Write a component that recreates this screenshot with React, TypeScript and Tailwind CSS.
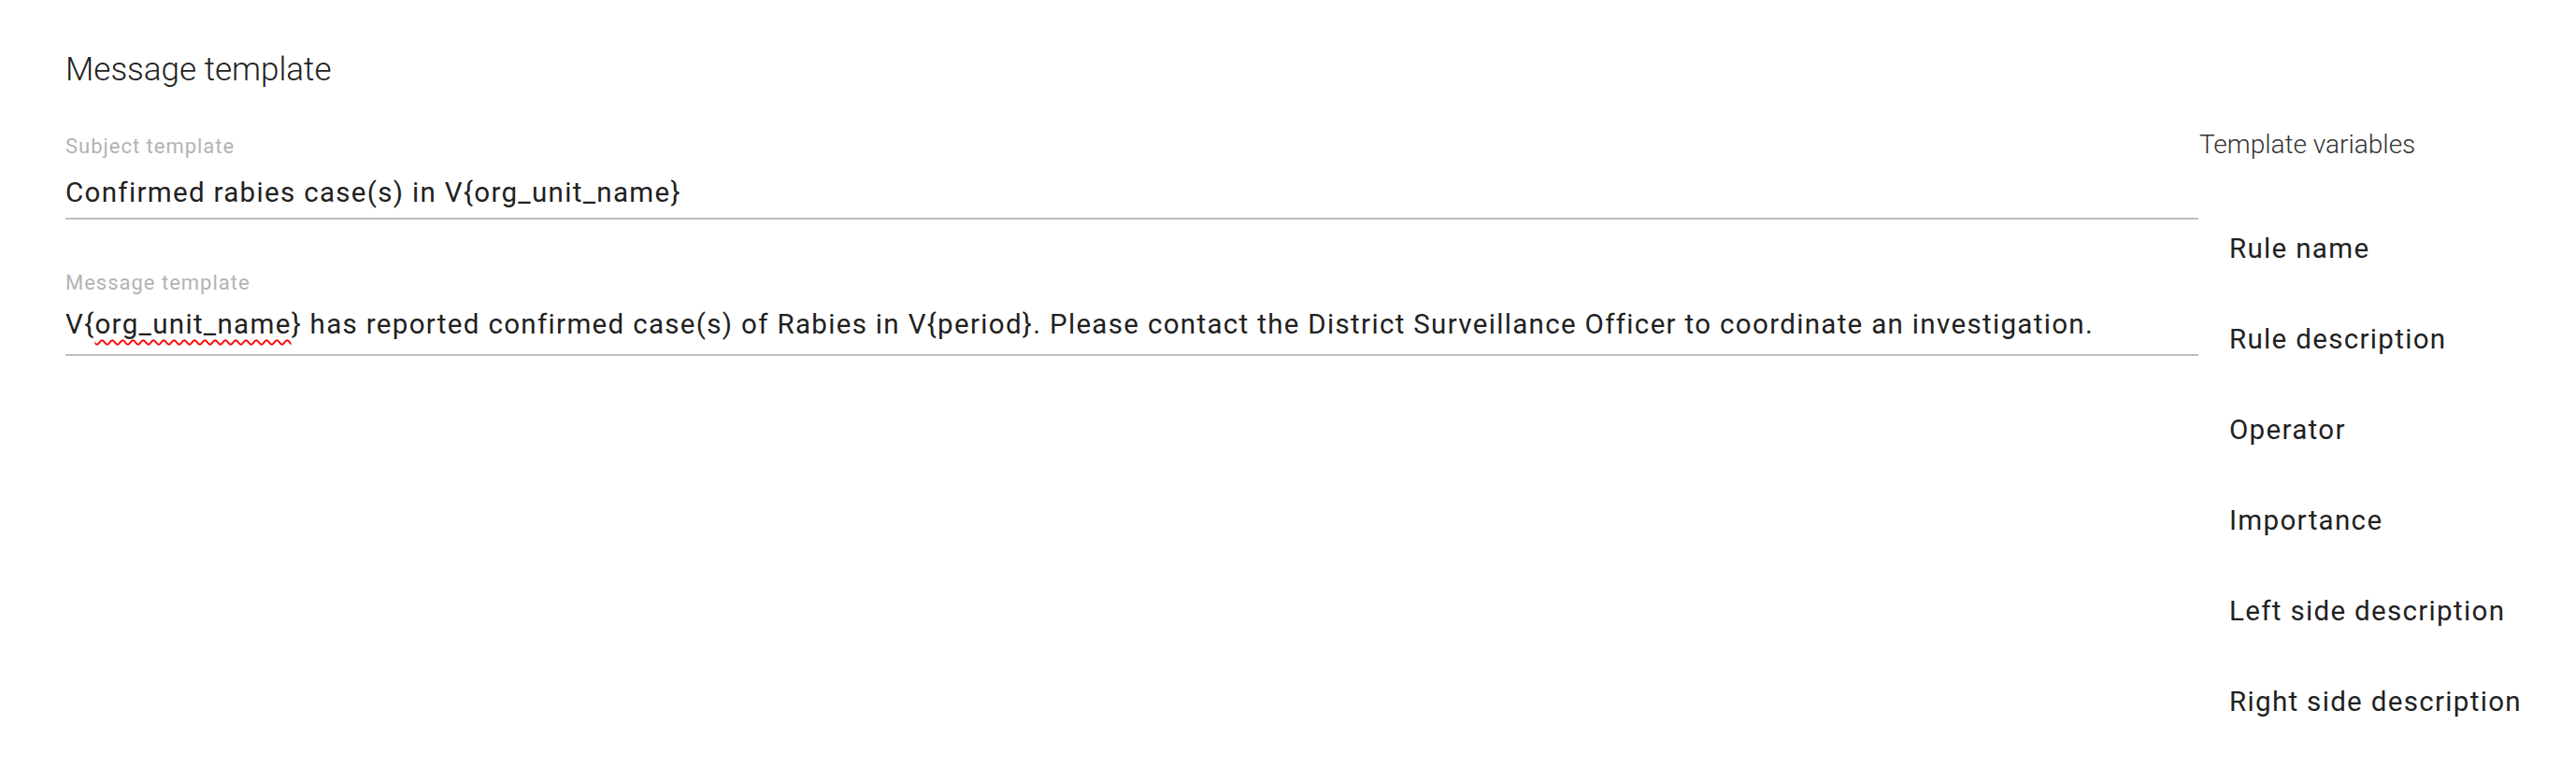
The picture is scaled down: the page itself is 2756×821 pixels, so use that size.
import React from 'react';

const variables = [
  'Rule name',
  'Rule description',
  'Operator',
  'Importance',
  'Left side description',
  'Right side description',
];

export default function App() {
  return (
    <div className="min-h-[821px] bg-white pl-[70px] font-['Roboto',sans-serif] text-[#212121]">
      {/* Section title */}
      <h2 className="pt-[57px] text-[35px] leading-[35px] font-light text-[#212121]">
        Message template
      </h2>

      <div className="mt-[49px] flex">
        {/* Fields */}
        <div className="flex-1">
          <div className="border-b-2 border-[#bdbdbd] pb-[13px]">
            <label className="mt-[5px] block text-[22px] leading-[21px] tracking-[0.045em] text-[#b3b3b3]">
              Subject template
            </label>
            <div className="mt-[25px] text-[29.5px] leading-[28px] tracking-[0.045em]">
              Confirmed rabies case(s) in V{'{org_unit_name}'}
            </div>
          </div>

          <div className="mt-[57px] border-b-2 border-[#bdbdbd] pb-[18px]">
            <label className="block text-[22px] leading-[21px] tracking-[0.045em] text-[#b3b3b3]">
              Message template
            </label>
            <div className="mt-[20px] text-[29.5px] leading-[28px] tracking-[0.045em]">
              V{'{'}
              <span className="underline decoration-wavy decoration-[#ff0000] decoration-[1.5px] underline-offset-[6px]">
                org_unit_name
              </span>
              {'}'} has reported confirmed case(s) of Rabies in V{'{period}'}. Please contact the District
              Surveillance Officer to coordinate an investigation.
            </div>
          </div>
        </div>

        {/* Template variables */}
        <div className="w-[404px]">
          <div className="pl-px text-[28px] leading-[28px] font-light text-[#333333]">Template variables</div>
          <ul className="mt-[83px] flex flex-col gap-[69px] pl-[33px]">
            {variables.map((v) => (
              <li key={v} className="whitespace-nowrap text-[29.5px] leading-[28px] tracking-[0.045em] text-[#212121]">
                {v}
              </li>
            ))}
          </ul>
        </div>
      </div>
    </div>
  );
}
